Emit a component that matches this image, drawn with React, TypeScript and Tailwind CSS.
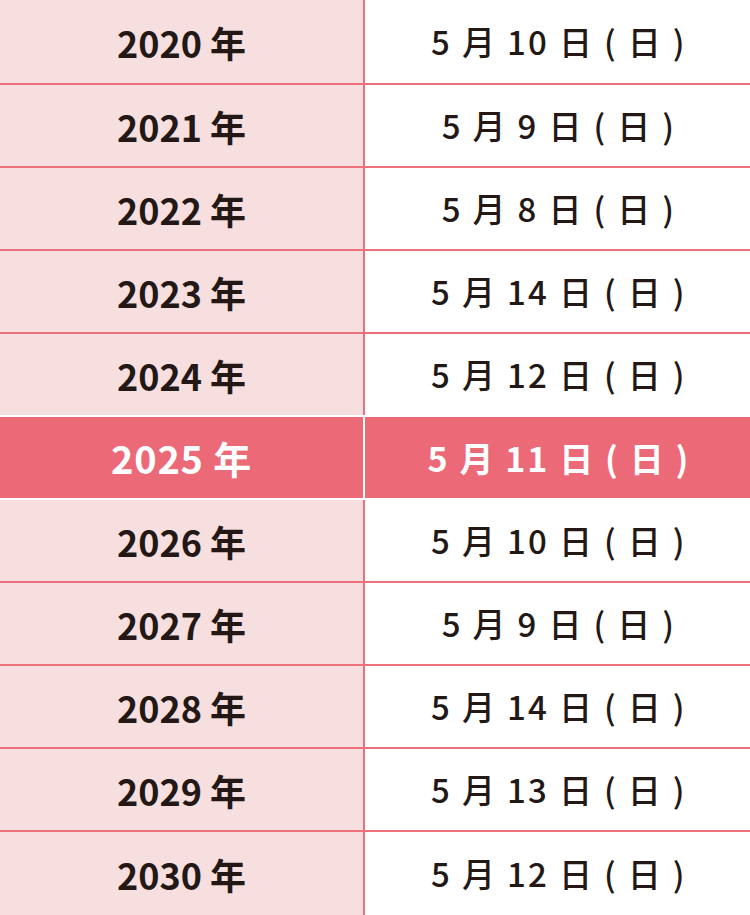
const rows = [
  { year: "2020", date: "5 月 10 日 ( 日 )" },
  { year: "2021", date: "5 月 9 日 ( 日 )" },
  { year: "2022", date: "5 月 8 日 ( 日 )" },
  { year: "2023", date: "5 月 14 日 ( 日 )" },
  { year: "2024", date: "5 月 12 日 ( 日 )" },
  { year: "2025", date: "5 月 11 日 ( 日 )", current: true },
  { year: "2026", date: "5 月 10 日 ( 日 )" },
  { year: "2027", date: "5 月 9 日 ( 日 )" },
  { year: "2028", date: "5 月 14 日 ( 日 )" },
  { year: "2029", date: "5 月 13 日 ( 日 )" },
  { year: "2030", date: "5 月 12 日 ( 日 )" },
];

const font = { fontFamily: '"Noto Sans CJK JP", "Noto Sans", sans-serif' };

export default function App() {
  return (
    <div className="w-[750px] h-[915px] overflow-hidden bg-white" style={font}>
      {rows.map((row, i) => {
        const prevCurrent = i > 0 && rows[i - 1].current;
        const whiteTop = row.current || prevCurrent;
        return (
          <div
            key={row.year}
            className={[
              "flex",
              i === 0 ? "h-[83px]" : i === rows.length - 1 ? "h-[85px] border-t-2" : "h-[83px] border-t-2",
              whiteTop ? "border-white" : "border-[#ec6f7c]",
              row.current ? "bg-[#ec6977] text-white" : "text-[#231815]",
            ].join(" ")}
          >
            {/* year */}
            <div
              className={[
                "w-[365px] shrink-0 flex items-center justify-center border-r-2 font-bold",
                row.current
                  ? "border-white text-[38px] tracking-[0.02em]"
                  : "bg-[#f7dfe0] border-[#ec6f7c] text-[36px]",
              ].join(" ")}
            >
              {row.year} 年
            </div>
            {/* date */}
            <div
              className={[
                "flex-1 flex items-center justify-center pl-[3px]",
                row.current
                  ? "font-bold text-[34px] tracking-[0.06em]"
                  : "font-medium text-[33px] tracking-[0.07em]",
              ].join(" ")}
            >
              {row.date}
            </div>
          </div>
        );
      })}
    </div>
  );
}
